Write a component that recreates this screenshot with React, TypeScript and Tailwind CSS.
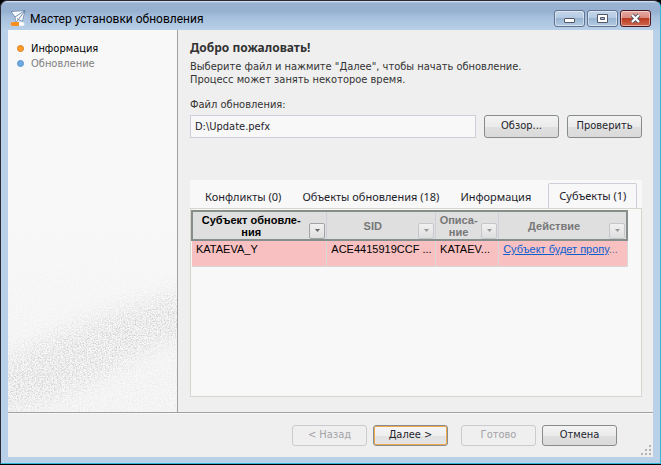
import type { ReactNode } from "react";

const tabs = [
    { title: "Конфликты (0)", active: false },
    { title: "Объекты обновления (18)", active: false },
    { title: "Информация", active: false },
    { title: "Субъекты (1)", active: true },
];

const columns = [
    { title: ["Субъект обновле-", "ния"], width: "w-[31%]", active: true },
    { title: ["SID"], width: "w-[25%]", active: false },
    { title: ["Описа-", "ние"], width: "w-[14.5%]", active: false },
    { title: ["Действие"], width: "w-[29.5%]", active: false },
];

function AppIcon() {
    return (
        <svg width="16" height="17" viewBox="0 0 16 17" className="shrink-0" aria-hidden="true">
            <path d="M1 1 L15 0.5 L14 10 L9 13 L4 13 L5 8 Z" fill="#dbe6f3" />
            <path d="M1 1.5 L15 0.5 L12.5 11.5 L8.5 9.5 L5.5 12.5 L5 7 Z" fill="#f6fafe" stroke="#6a84a8" strokeWidth="0.9" />
            <path d="M15 0.5 L5 7 M15 0.5 L8.5 9.5 L7 8.5" fill="none" stroke="#6a84a8" strokeWidth="0.9" />
            <rect x="0.5" y="12" width="14" height="4" rx="2" fill="#fff" stroke="#c9d3e0" strokeWidth="0.5" />
            <path d="M2.5 12 H9 V16 H2.5 A2 2 0 0 1 2.5 12 Z" fill="#f58f22" />
        </svg>
    );
}

function CaptionButton({ label, danger, children }: { label: string; danger?: boolean; children: ReactNode }) {
    const look = danger
        ? "border-[#4a1622] bg-[linear-gradient(#e5aaa3_0%,#d98a80_48%,#bb3a22_50%,#cf6a50_100%)]"
        : "border-[#61738f] bg-[linear-gradient(#c3d5ea_0%,#b4cae2_48%,#98b4d2_50%,#b3cce4_100%)]";
    return (
        <button aria-label={label} className={`flex h-[17px] w-[31px] items-center justify-center rounded-[3px] border shadow-[inset_0_0_0_1px_rgba(255,255,255,0.45)] ${look}`}>
            {children}
        </button>
    );
}

function Button({ children, size, disabled, primary }: { children: ReactNode; size: string; disabled?: boolean; primary?: boolean }) {
    let look = "border-[#868c8c] text-[#1e1e2c] bg-[linear-gradient(#f3f3f3_0%,#ebebeb_50%,#dfdfdf_52%,#dadada_100%)]";
    if (disabled) look = "border-[#c9cccf] text-[#a3a3a8] bg-[#efefef]";
    if (primary) look = "border-[#868c8c] text-[#1e1e2c] bg-[linear-gradient(#f6f6f6_0%,#efefef_50%,#e2e2e2_52%,#e4e4e4_100%)] shadow-[inset_0_0_0_1px_#f0a94c]";
    return (
        <button disabled={disabled} className={`w-[75px] shrink-0 rounded-[3px] border ${size} ${look}`}>
            {children}
        </button>
    );
}

function Sidebar() {
    return (
        <nav className="relative w-[170px] shrink-0 border-r border-[#a0a0a0] bg-[#f8f8f8]">
            <svg className="absolute bottom-0 left-0" width="169" height="200" viewBox="0 -30 169 200" aria-hidden="true">
                <defs>
                    <filter id="grain" x="0" y="0" width="100%" height="100%" colorInterpolationFilters="sRGB">
                        <feTurbulence type="fractalNoise" baseFrequency="0.73" numOctaves="4" seed="11" />
                        <feColorMatrix values="0 0 0 0 0.74  0 0 0 0 0.74  0 0 0 0 0.74  2.2 0 0 0 -0.8" />
                    </filter>
                    <filter id="soft" x="-30%" y="-50%" width="160%" height="200%">
                        <feGaussianBlur stdDeviation="10" />
                    </filter>
                    <linearGradient id="fade" x1="0" y1="0" x2="0" y2="1">
                        <stop offset="0" stopColor="#000" />
                        <stop offset="1" stopColor="#383838" />
                    </linearGradient>
                    <mask id="band">
                        <rect y="-30" width="169" height="200" fill="url(#fade)" />
                        <path d="M-50 145 L0 116 L52 91 L112 68 L200 44 L200 84 L130 114 L70 148 L0 170 L-50 180 Z" fill="#b4b4b4" filter="url(#soft)" />
                    </mask>
                </defs>
                <rect y="-30" width="169" height="200" filter="url(#grain)" mask="url(#band)" />
            </svg>
            <ul className="relative pt-[11px] pl-[9px] leading-[15px]">
                <li className="flex items-center gap-[7px] text-black">
                    <span className="size-[7px] rounded-full border border-[#d97a18] bg-[#ff9f2a]" />
                    Информация
                </li>
                <li className="flex items-center gap-[7px] text-[#808080]">
                    <span className="size-[7px] rounded-full border border-[#5a96d2] bg-[#6ea8e0]" />
                    Обновление
                </li>
            </ul>
        </nav>
    );
}

function SubjectsTable() {
    const cell = "overflow-hidden border-r border-b border-[#d8d8d8] px-1 pt-0 whitespace-nowrap";
    return (
        <table className="w-full table-fixed border-collapse font-['Liberation_Sans',Arial,sans-serif] text-[11px]">
            <thead>
                <tr className="h-[29px] border-2 border-[#868f8c] bg-[#dfdfdf]">
                    {columns.map((col) => (
                        <th key={col.title[0]} scope="col" className={`border-r border-[#cfcfd9] p-0 ${col.width} ${col.active ? "text-black" : "text-[#777]"}`}>
                            <div className="flex h-[26px] items-center">
                                <span className="flex-1 leading-3">
                                    {col.title.map((line) => <span key={line} className="block whitespace-nowrap">{line}</span>)}
                                </span>
                                <button aria-label="Фильтр" className={`mr-px flex size-4 shrink-0 items-center justify-center self-end rounded-[2px] border bg-[linear-gradient(#f1f1f1,#dedede)] ${col.active ? "border-[#a0a3a8]" : "border-[#c6c6cc]"}`}>
                                    <svg width="5" height="3" viewBox="0 0 5 3"><path d="M0 0h5L2.5 3z" fill={col.active ? "#666" : "#999"} /></svg>
                                </button>
                            </div>
                        </th>
                    ))}
                </tr>
            </thead>
            <tbody>
                <tr className="h-[26px] bg-[#f8c0c0] align-top leading-4 text-black">
                    <td className={cell}>KATAEVA_Y</td>
                    <td className={cell}>ACE4415919CCF ...</td>
                    <td className={cell}>KATAEV...</td>
                    <td className={cell}>
                        <a href="#subject" className="text-[#0a5fd0] underline">Субъект будет пропу</a>
                        <span className="text-[#6a6a90]">...</span>
                    </td>
                </tr>
            </tbody>
        </table>
    );
}

function Grip() {
    const dots = [[8, 0], [4, 4], [8, 4], [0, 8], [4, 8], [8, 8]];
    return (
        <svg width="10" height="10" viewBox="0 0 10 10" className="absolute right-0.5 bottom-0.5" aria-hidden="true">
            {dots.map(([x, y]) => <rect key={`${x}-${y}`} x={x} y={y} width="2" height="2" fill="#b4b4b4" />)}
        </svg>
    );
}

export default function App() {
    return (
        <div className="flex min-h-screen flex-col bg-black pb-px font-['DejaVu_Sans_Condensed','Noto_Sans',sans-serif] text-[11px]">
            <div className="flex flex-1 flex-col rounded-t-[7px] border border-t-[#2b2b38] border-r-[#35b8d8] border-b-[#35b8d8] border-l-[#2b2b38] bg-[#b9d1e8] bg-[linear-gradient(#dfe9f5_0px,#9ab3d3_2px,#96b0d1_10px,#a6bfdd_16px,#b9d1e8_30px)] pr-[7px] pb-[6px] pl-[7px]">
                <header className="flex h-[29px] shrink-0 items-center gap-1 pt-[6px] pr-[2px] pl-[2px] font-[Roboto,'Open_Sans',sans-serif] text-xs text-black">
                    <AppIcon />
                    <h1 className="flex-1">Мастер установки обновления</h1>
                    <div className="flex gap-[2px]">
                        <CaptionButton label="Свернуть"><span className="mt-1 h-[5px] w-[11px] rounded-[1px] border border-[#535666] bg-white" /></CaptionButton>
                        <CaptionButton label="Развернуть">
                            <svg width="11" height="9" viewBox="0 0 11 9"><path d="M.5.5h10v8h-10z" fill="#fff" stroke="#535666" /><path d="M3.5 3.5h4v2h-4z" fill="#a5bfdb" stroke="#535666" /></svg>
                        </CaptionButton>
                        <CaptionButton label="Закрыть" danger>
                            <svg width="13" height="11" viewBox="0 0 13 11"><path d="M3 2l7 7M10 2l-7 7" stroke="#535666" strokeWidth="4" /><path d="M3 2l7 7M10 2l-7 7" stroke="#fff" strokeWidth="2.2" /></svg>
                        </CaptionButton>
                    </div>
                </header>

                <div className="flex flex-1 flex-col bg-[#efefef]">
                    <div className="flex flex-1 border-b border-[#a0a0a0]">
                        <Sidebar />
                        <main className="flex min-w-0 flex-1 flex-col pt-[10px] pr-[11px] pb-[15px] pl-3 text-[#333]">
                            <h2 className="font-['Noto_Sans',sans-serif] text-xs leading-4 font-bold">Добро пожаловать!</h2>
                            <p className="mt-1 leading-[13px]">Выберите файл и нажмите "Далее", чтобы начать обновление.<br />Процесс может занять некоторое время.</p>
                            <label htmlFor="file" className="mt-3 leading-[13px]">Файл обновления:</label>
                            <div className="mt-1 flex items-center">
                                <input id="file" defaultValue="D:\Update.pefx" className="h-[23px] min-w-0 flex-1 border border-[#cfcfda] bg-[#f8f8f8] px-1 text-[#1e1e2c]" />
                                <div className="ml-2 flex gap-2">
                                    <Button size="h-[23px]">Обзор...</Button>
                                    <Button size="h-[23px]">Проверить</Button>
                                </div>
                            </div>
                            <div role="tablist" className="mt-[42px] flex h-7 items-end gap-px bg-[#f8f8f8] pl-[5px] font-['Noto_Sans',sans-serif] text-[#1e1e2c]">
                                {tabs.map((tab) => (
                                    <button
                                        key={tab.title}
                                        role="tab"
                                        aria-selected={tab.active}
                                        className={tab.active ? "-mb-px ml-[6px] h-[26px] rounded-t-[2px] border border-b-0 border-[#cfcfda] bg-[#f8f8f8] px-[10px]" : "h-[25px] px-[10px] pt-1"}
                                    >
                                        {tab.title}
                                    </button>
                                ))}
                            </div>
                            <div className="flex-1 border border-[#d6d6ce] bg-[#f8f8f8] pt-px pr-[13px]">
                                <SubjectsTable />
                            </div>
                        </main>
                    </div>
                    <footer className="relative flex h-[44px] items-center justify-end gap-[13px] border-t border-[#f8f8f8] pr-9">
                        <div className="flex gap-[6px]">
                            <Button size="h-[21px]" disabled>&lt; Назад</Button>
                            <Button size="h-[21px]" primary>Далее &gt;</Button>
                        </div>
                        <div className="flex gap-[6px]">
                            <Button size="h-[21px]" disabled>Готово</Button>
                            <Button size="h-[21px]">Отмена</Button>
                        </div>
                        <Grip />
                    </footer>
                </div>
            </div>
        </div>
    );
}
